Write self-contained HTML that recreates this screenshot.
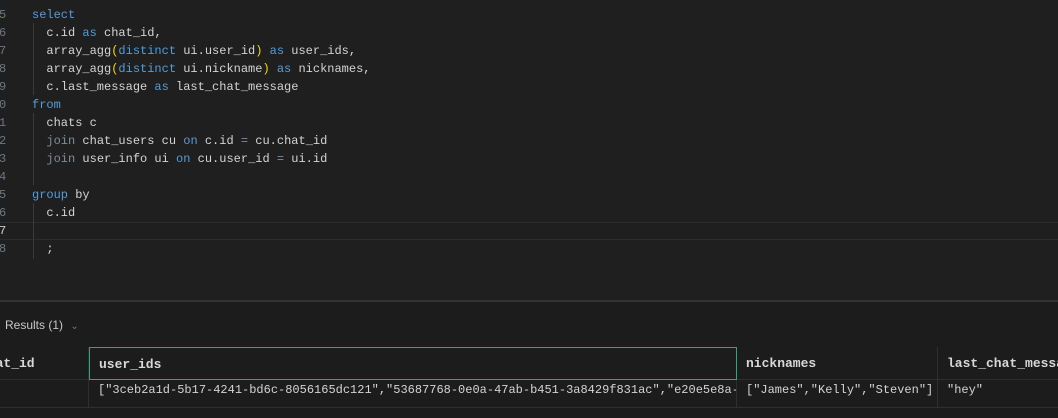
<!DOCTYPE html>
<html><head><style>
body{margin:0;width:1058px;height:416px;background:#1f1f1f;overflow:hidden;position:relative;font-family:"Liberation Mono",monospace;}
.ed{position:absolute;left:0;top:0;width:1058px;height:300px;background:#1f1f1f;}
.ln{position:absolute;left:-1px;width:14px;font-size:12px;color:#6e7681;line-height:18px;text-align:left;}
.cl{position:absolute;left:32px;font-size:12px;color:#d4d4d4;line-height:18px;white-space:pre;}
.k{color:#569cd6}.p{color:#ffd700}.g{color:#7f8c9a}
.guide{position:absolute;left:33px;width:1px;background:#3a3a3a;}
.cur{position:absolute;left:0;top:222px;width:1058px;height:18px;border-top:1px solid #2c2c2c;border-bottom:1px solid #2c2c2c;box-sizing:border-box;}
.panel{position:absolute;left:0;top:300px;width:1058px;height:116px;background:#1c1c1c;border-top:2px solid #333;}
.res{position:absolute;left:5px;top:16px;font-family:"Liberation Sans",sans-serif;font-size:12px;color:#c8c8c8;}
.th{position:absolute;top:45px;height:33px;border-right:1px solid #2f2f2f;border-bottom:1px solid #2f2f2f;box-sizing:border-box;font-weight:bold;font-size:13px;color:#d8d8d8;line-height:33px;padding-left:9px;white-space:nowrap;overflow:hidden;}
.td{position:absolute;top:78px;height:28px;border-right:1px solid #2f2f2f;border-bottom:1px solid #2f2f2f;box-sizing:border-box;font-size:12px;color:#d4d4d4;line-height:20px;padding-left:9px;white-space:nowrap;overflow:hidden;}
.sel{border:1px solid #2fa67a !important;}
</style></head><body>
<div class="ed">
<div class="cur"></div>
<div class="guide" style="top:23px;height:72px"></div>
<div class="guide" style="top:113px;height:72px"></div>
<div class="guide" style="top:203px;height:56px"></div>
<div class="ln" style="top:6px">5<br>6<br>7<br>8<br>9<br>0<br>1<br>2<br>3<br>4<br>5<br>6<br><span style="color:#ccc">7</span><br>8</div>
<div class="cl" style="top:6px"><span class="k">select</span>
  c.id <span class="k">as</span> chat_id,
  array_agg<span class="p">(</span><span class="k">distinct</span> ui.user_id<span class="p">)</span> <span class="k">as</span> user_ids,
  array_agg<span class="p">(</span><span class="k">distinct</span> ui.nickname<span class="p">)</span> <span class="k">as</span> nicknames,
  c.last_message <span class="k">as</span> last_chat_message
<span class="k">from</span>
  chats c
  <span class="g">join</span> chat_users cu <span class="k">on</span> c.id <span class="g">=</span> cu.chat_id
  <span class="g">join</span> user_info ui <span class="k">on</span> cu.user_id <span class="g">=</span> ui.id

<span class="k">group</span> by
  c.id

  ;</div>
</div>
<div class="panel">
<div class="res">Results (1) <span style="color:#777;font-size:10px;margin-left:4px">&#8964;</span></div>
<div class="th" style="left:-29px;width:118px">chat_id</div>
<div class="th sel" style="left:89px;width:648px">user_ids</div>
<div class="th" style="left:737px;width:201px">nicknames</div>
<div class="th" style="left:938px;width:140px">last_chat_message</div>
<div class="td" style="left:0;width:89px"></div>
<div class="td" style="left:89px;width:648px">["3ceb2a1d-5b17-4241-bd6c-8056165dc121","53687768-0e0a-47ab-b451-3a8429f831ac","e20e5e8a-</div>
<div class="td" style="left:737px;width:201px">["James","Kelly","Steven"]</div>
<div class="td" style="left:938px;width:140px">"hey"</div>
</div>
</body></html>
